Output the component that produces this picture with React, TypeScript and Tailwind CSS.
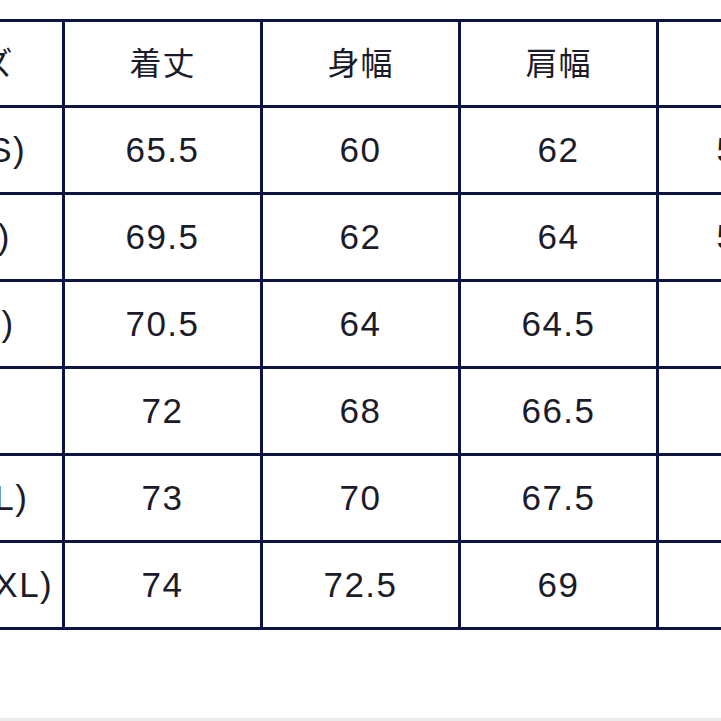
import React from "react";

const header = ["サイズ", "着丈", "身幅", "肩幅", "袖丈"];

const rows: string[][] = [
  ["S\u00a0\u00a0(XS)", "65.5", "60", "62", "56.5"],
  ["M (S)", "69.5", "62", "64", "58.5"],
  ["L\u00a0\u00a0(M)", "70.5", "64", "64.5", "60"],
  ["XL", "72", "68", "66.5", "62"],
  ["XXL (L)", "73", "70", "67.5", "63"],
  ["XXXL (XL)", "74", "72.5", "69", "65"],
];

function Cell({
  children,
  jp,
  wide,
}: {
  children: React.ReactNode;
  jp?: boolean;
  wide?: boolean;
}) {
  let size = "text-[35px] tracking-[1.5px]";
  if (jp) size = "text-[32px] tracking-[1px]";
  else if (wide) size = "text-[35px] tracking-[3px]";
  return (
    <div
      className={
        "bg-white flex items-center justify-center whitespace-nowrap text-[#1b1b2a] " +
        size
      }
    >
      {children}
    </div>
  );
}

export default function App() {
  return (
    <div
      className="w-[721px] h-[721px] overflow-hidden bg-white flex flex-col"
      style={{ fontFamily: '"Liberation Sans", "Noto Sans CJK JP", sans-serif' }}
    >
      <div className="mt-[19px] ml-[-136px] w-[990px] bg-[#0c1445] p-[3px] grid grid-cols-[195px_195px_195px_195px_195px] grid-rows-[83px_84px_84px_84px_84px_84px_84px] gap-[3px]">
        {header.map((h) => (
          <Cell key={h} jp>
            {h}
          </Cell>
        ))}
        {rows.map((r, i) =>
          r.map((v, j) => (
            <Cell key={i + "-" + j} wide={j === 4}>
              {v}
            </Cell>
          ))
        )}
      </div>
      <div className="flex-1" />
      <div className="h-[3px] bg-[#ebebeb]" />
    </div>
  );
}
